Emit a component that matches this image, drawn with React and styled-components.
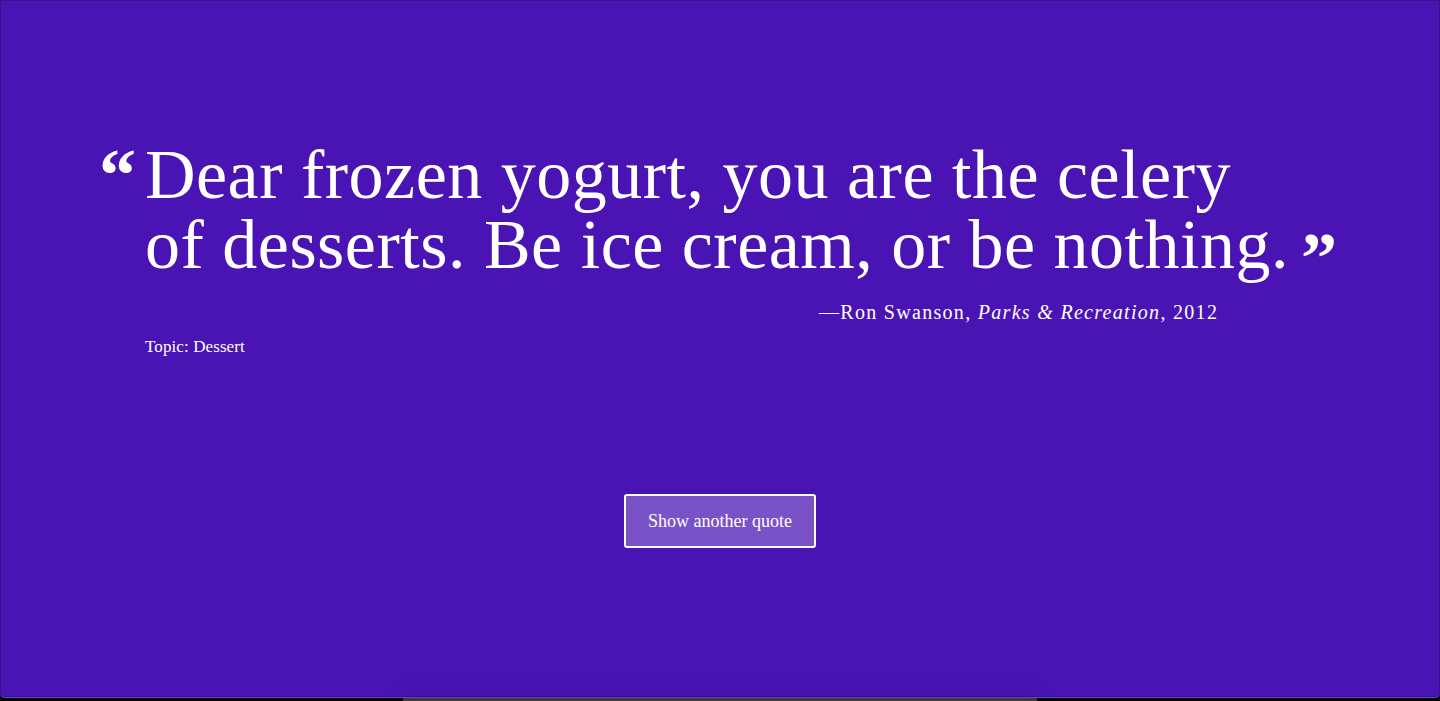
import React from "react";
import styled, { createGlobalStyle } from "styled-components";

const Global = createGlobalStyle`
  html, body { margin: 0; padding: 0; background: #050308; }
  body { font-family: "Liberation Serif", "Times New Roman", serif; color: #fff; }
`;

const Frame = styled.div`
  height: 701px;
  display: flex;
  flex-direction: column;
  align-items: center;
  overflow: hidden;
`;

const Card = styled.main`
  box-sizing: border-box;
  width: 100%;
  height: 698px;
  background: #4a14b5;
  border-radius: 0 0 5px 5px;
  border-bottom: 1px solid #6a48c8;
  box-shadow: 0 0 0 1px #3a0f90 inset;
  display: flex;
  flex-direction: column;
  align-items: center;
  padding-top: 140px;
`;

const Shelf = styled.div`
  width: 634px;
  height: 3px;
  background: #3a3840;
  box-shadow: 0 -6px 14px rgba(40, 10, 110, 0.6);
`;

const Quote = styled.figure`
  margin: 0;
  width: 100%;
  display: flex;
  align-items: flex-start;
  gap: 12px;
  padding-left: 99px;
  box-sizing: border-box;
`;

const OpenMark = styled.span`
  font-family: "Liberation Serif", serif;
  font-weight: 700;
  font-size: 74px;
  line-height: 70px;
  letter-spacing: -3px;
`;

const Body = styled.div`
  display: flex;
  flex-direction: column;
`;

const Text = styled.blockquote`
  margin: 0;
  font-size: 70px;
  line-height: 70px;
  letter-spacing: 0.5px;
  width: 1158px;
`;

const CloseMark = styled.span`
  font-weight: 700;
  font-size: 72px;
  display: inline-block;
  margin-left: 12px;
  margin-right: -60px;
  vertical-align: -14px;
  line-height: 0;
  letter-spacing: -3px;
`;

const Cite = styled.figcaption`
  align-self: flex-start;
  margin-left: 674px;
  margin-top: 21px;
  font-size: 20px;
  letter-spacing: 1.3px;
`;

const Topic = styled.p`
  margin: 13px 0 0;
  font-size: 17px;
  letter-spacing: 0.1px;
`;

const Button = styled.button`
  margin-top: 137px;
  width: 192px;
  height: 54px;
  background: #7a52c8;
  color: #fff;
  border: 2px solid #fff;
  border-radius: 3px;
  font-family: "Liberation Serif", serif;
  font-size: 18px;
  cursor: pointer;
`;

export default function App() {
  return (
    <>
      <Global />
      <Frame>
        <Card>
          <Quote>
            <OpenMark>“</OpenMark>
            <Body>
              <Text>
                Dear frozen yogurt, you are the celery of desserts. Be ice cream, or be
                nothing.<CloseMark>”</CloseMark>
              </Text>
              <Cite>
                —Ron Swanson, <i>Parks &amp; Recreation</i>, 2012
              </Cite>
              <Topic>Topic: Dessert</Topic>
            </Body>
          </Quote>
          <Button>Show another quote</Button>
        </Card>
        <Shelf />
      </Frame>
    </>
  );
}
